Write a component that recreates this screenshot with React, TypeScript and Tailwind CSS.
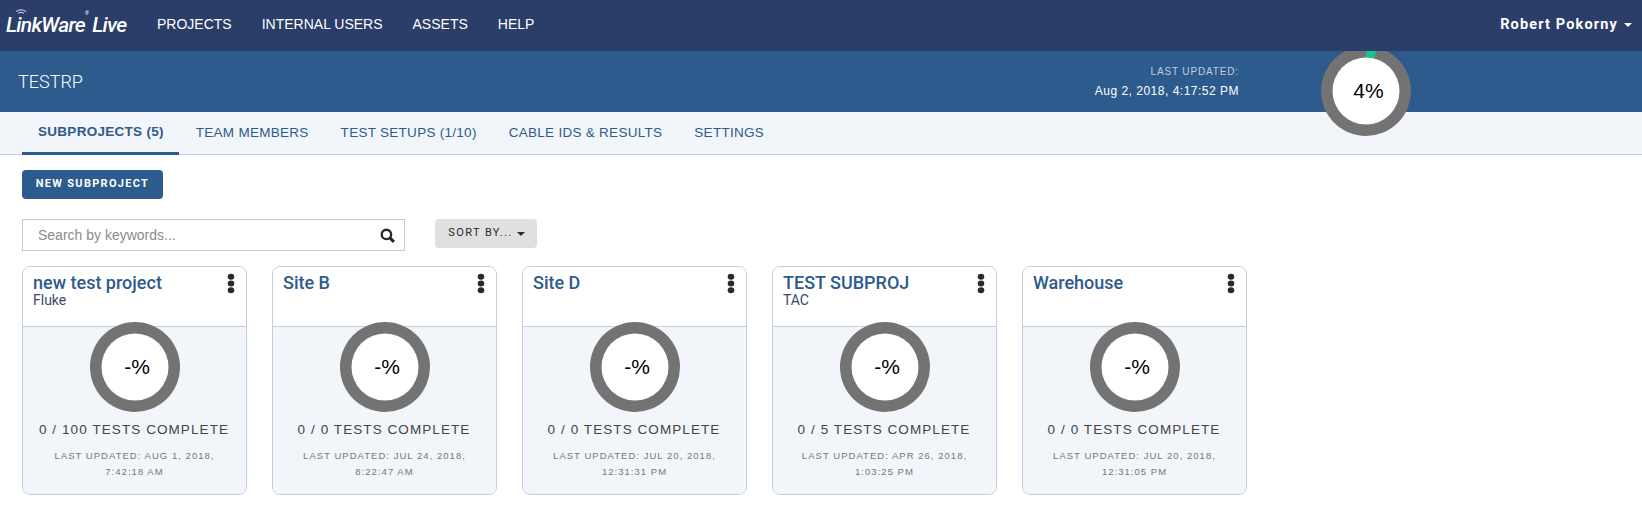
import React from "react";

const cards = [
  { name: "new test project", sub: "Fluke", done: "0 / 100", date: "AUG 1, 2018,", time: "7:42:18 AM" },
  { name: "Site B", sub: "", done: "0 / 0", date: "JUL 24, 2018,", time: "8:22:47 AM" },
  { name: "Site D", sub: "", done: "0 / 0", date: "JUL 20, 2018,", time: "12:31:31 PM" },
  { name: "TEST SUBPROJ", sub: "TAC", done: "0 / 5", date: "APR 26, 2018,", time: "1:03:25 PM" },
  { name: "Warehouse", sub: "", done: "0 / 0", date: "JUL 20, 2018,", time: "12:31:05 PM" },
];

const navItems = ["PROJECTS", "INTERNAL USERS", "ASSETS", "HELP"];
const tabs = ["TEAM MEMBERS", "TEST SETUPS (1/10)", "CABLE IDS & RESULTS", "SETTINGS"];

const Donut = ({ label, pct = 0 }: { label: string; pct?: number }) => (
  <div className="relative w-[90px] h-[90px]">
    <svg viewBox="0 0 90 90" className="absolute inset-0 w-full h-full">
      <circle cx="45" cy="45" r="45" fill="#737373" />
      {pct > 0 && <path d="M45 45 L45 0 A45 45 0 0 1 56.2 1.4 Z" fill="#1fbf8f" />}
      <circle cx="45" cy="45" r="33.5" fill="#fff" />
    </svg>
    <span className="absolute inset-0 pl-[5px] flex items-center justify-center text-[21px] text-black font-['Liberation_Sans',sans-serif]">
      {label}
    </span>
  </div>
);

const Card = ({ name, sub, done, date, time }: (typeof cards)[number]) => (
  <div className="w-[225px] h-[229px] border border-[#c5cede] rounded-lg overflow-hidden flex flex-col">
    <div className="h-[60px] shrink-0 bg-white border-b border-[#c5cede] px-[10px] pt-[5px] flex justify-between">
      <div>
        <div className="text-[18px] leading-[22px] font-medium text-[#2d5b8d]">{name}</div>
        <div className="text-[14px] leading-[14px] -mt-[1px] text-[#3a4a68]">{sub}</div>
      </div>
      <svg width="8" height="21" viewBox="0 0 8 20" className="mt-[1px] mr-[1px] fill-[#2a2a2a]">
        <ellipse cx="4" cy="3.2" rx="3.3" ry="3" />
        <ellipse cx="4" cy="10" rx="3.3" ry="3" />
        <ellipse cx="4" cy="16.8" rx="3.3" ry="3" />
      </svg>
    </div>
    <div className="flex-1 bg-[#f2f5f9] flex flex-col items-center">
      <div className="-mt-[5px] relative">
        <Donut label="-%" />
      </div>
      <div className="mt-[8px] pr-[1px] text-[13.5px] leading-[20px] tracking-[1.08px] text-[#444] font-['Liberation_Sans',sans-serif]">
        {done} TESTS COMPLETE
      </div>
      <div className="mt-[8px] text-center text-[9.5px] leading-[15.5px] tracking-[1.03px] text-[#777] font-['Liberation_Sans',sans-serif]">
        <div>LAST UPDATED: {date}</div>
        <div>{time}</div>
      </div>
    </div>
  </div>
);

export default function App() {
  return (
    <div className="min-h-[505px] bg-white font-['Roboto',sans-serif] overflow-hidden">
      <header className="h-[51px] bg-[#2b3d69] flex items-center text-white">
        <div className="relative w-[157px] pl-[6px] italic font-medium text-[21px] tracking-[-0.7px]">
          <svg width="12" height="6" viewBox="0 0 14 7" className="absolute left-[15px] -top-[1px] stroke-white fill-none">
            <path d="M1 3 Q7 -1 13 3 M3.5 5 Q7 2.5 10.5 5" strokeWidth="1" />
          </svg>
          LinkWare<span className="text-[5px] align-top font-normal">®</span>
          <span className="ml-[4px]">Live</span>
        </div>
        <nav className="flex gap-[30px] text-[14px] -mt-[2px] font-['Liberation_Sans',sans-serif]">
          {navItems.map((n) => (
            <span key={n}>{n}</span>
          ))}
        </nav>
        <div className="ml-auto mr-[10px] -mt-[2px] flex items-center gap-[6px] text-[14.5px] font-bold tracking-[1.15px]">
          Robert Pokorny
          <span className="w-0 h-0 border-x-[4px] border-x-transparent border-t-[4px] border-t-white" />
        </div>
      </header>

      <div className="relative h-[61px] bg-[#2d5b8d] flex items-center text-white">
        <div className="pl-[18px] text-[18px] font-light -mt-[1px]">TESTRP</div>
        <div className="ml-auto mr-[403px] text-right font-['Liberation_Sans',sans-serif]">
          <div className="text-[10px] leading-[14px] tracking-[0.85px] text-[#c3cedd]">LAST UPDATED:</div>
          <div className="mt-[4px] text-[12px] leading-[16px] tracking-[0.5px]">Aug 2, 2018, 4:17:52 PM</div>
        </div>
        <div className="absolute left-[1321px] top-0 h-[85px] w-[90px] overflow-hidden">
          <div className="-mt-[5px]">
            <Donut label="4%" pct={4} />
          </div>
        </div>
      </div>

      <div className="h-[43px] bg-[#f2f5f9] border-b border-[#c5cede] flex pl-[22px] text-[13.5px] tracking-[0.28px] font-['Liberation_Sans',sans-serif]">
        <div className="h-[43px] pl-[16px] pr-[15px] pt-[1px] flex items-center border-b-[3px] border-[#2d5b8d] font-bold text-[#2d5b8d]">
          SUBPROJECTS (5)
        </div>
        <div className="flex gap-[32px] pl-[17px] items-center text-[#2d5b8d]">
          {tabs.map((t) => (
            <span key={t}>{t}</span>
          ))}
        </div>
      </div>

      <div className="pl-[22px]">
        <button className="mt-[15px] block w-[141px] h-[29px] rounded-[4px] bg-[#2d5b8d] text-white text-[11px] font-bold tracking-[1.3px]">
          NEW SUBPROJECT
        </button>

        <div className="mt-[20px] flex gap-[30px] items-start">
          <div className="w-[383px] h-[32px] border border-[#c5c9d0] flex items-center justify-between pl-[15px] pr-[9px]">
            <span className="text-[14px] text-[#8c8c8c] font-['Liberation_Sans',sans-serif]">Search by keywords...</span>
            <svg width="15" height="15" viewBox="0 0 14 14" fill="none" stroke="#23282e" strokeWidth="2.2">
              <circle cx="6" cy="6" r="4.4" />
              <path d="M9.2 9.2 L13 13" strokeWidth="2.8" />
            </svg>
          </div>
          <div className="w-[102px] h-[29px] pl-[1px] rounded-[4px] bg-[#e0e0e0] flex items-center justify-center gap-[4px] text-[11px] tracking-[1.4px] text-[#2a2a2a]">
            SORT BY...
            <span className="w-0 h-0 border-x-[4px] border-x-transparent border-t-[4px] border-t-[#2a2a2a]" />
          </div>
        </div>

        <div className="mt-[15px] flex gap-[25px]">
          {cards.map((c) => (
            <Card key={c.name} {...c} />
          ))}
        </div>
      </div>
    </div>
  );
}
